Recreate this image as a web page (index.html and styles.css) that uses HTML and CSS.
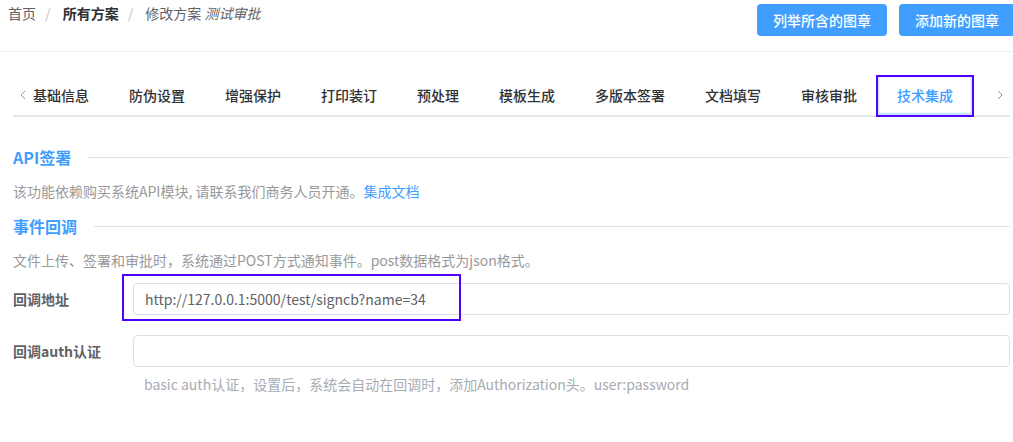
FILE: index.html
```html
<!DOCTYPE html>
<html lang="zh-CN">
<head>
  <meta charset="UTF-8">
  <title>修改方案 - 测试审批</title>
  <link rel="stylesheet" href="styles.css">
</head>
<body>
  <header class="topbar">
    <nav class="crumbs">
      <span class="crumb">首页</span><span class="sep">/</span>
      <span class="crumb strong">所有方案</span><span class="sep">/</span>
      <span class="crumb">修改方案 <i>测试审批</i></span>
    </nav>
    <div class="actions">
      <button class="btn">列举所含的图章</button>
      <button class="btn">添加新的图章</button>
    </div>
  </header>

  <main class="content">
    <div class="tabs">
      <span class="tab-arrow">
        <svg width="6" height="10" viewBox="0 0 6 10"><path d="M5 1 1 5l4 4" fill="none" stroke="#909399" stroke-width="1"/></svg>
      </span>
      <div class="tab-list">
        <span class="tab">基础信息</span>
        <span class="tab">防伪设置</span>
        <span class="tab">增强保护</span>
        <span class="tab">打印装订</span>
        <span class="tab">预处理</span>
        <span class="tab">模板生成</span>
        <span class="tab">多版本签署</span>
        <span class="tab">文档填写</span>
        <span class="tab">审核审批</span>
        <span class="tab active">技术集成</span>
      </div>
      <span class="tab-arrow">
        <svg width="6" height="10" viewBox="0 0 6 10"><path d="M1 1l4 4-4 4" fill="none" stroke="#909399" stroke-width="1"/></svg>
      </span>
    </div>

    <h3 class="sec-title"><span>API签署</span></h3>
    <p class="sec-desc">该功能依赖购买系统API模块, 请联系我们商务人员开通。<a class="link" href="#">集成文档</a></p>

    <h3 class="sec-title"><span>事件回调</span></h3>
    <p class="sec-desc">文件上传、签署和审批时，系统通过POST方式通知事件。post数据格式为json格式。</p>

    <form class="form">
      <div class="form-item">
        <label class="form-label">回调地址</label>
        <div class="field">
          <input class="input" type="text" value="http://127.0.0.1:5000/test/signcb?name=34">
          <span class="mark"></span>
        </div>
      </div>
      <div class="form-item">
        <label class="form-label">回调auth认证</label>
        <div class="field">
          <input class="input" type="text" value="">
          <div class="help">basic auth认证，设置后，系统会自动在回调时，添加Authorization头。user:password</div>
        </div>
      </div>
    </form>
  </main>
</body>
</html>
```

FILE: styles.css
```css
body {
  margin: 0;
  font-family: "Noto Sans CJK SC", "Noto Sans", sans-serif;
  font-size: 14px;
  color: #303133;
  background: #fff;
}
.topbar {
  display: flex;
  justify-content: space-between;
  align-items: flex-start;
  height: 51px;
  padding-left: 8px;
  border-bottom: 1px solid #ebeef5;
}
.crumbs {
  padding-top: 2px;
  line-height: 22px;
  color: #606266;
}
.crumb.strong {
  font-weight: 700;
  color: #303133;
}
.sep {
  margin: 0 9px;
  color: #c0c4cc;
}
.actions {
  display: flex;
  gap: 12px;
  padding-top: 4px;
  margin-right: -2px;
}
.btn {
  height: 32px;
  padding: 0 16px;
  border: none;
  border-radius: 4px;
  background: #409eff;
  color: #fff;
  font-family: inherit;
  font-size: 14px;
  font-weight: 500;
}
.content {
  padding: 0 3px 0 13px;
  margin-top: 23px;
}
.tabs {
  display: flex;
  border-bottom: 2px solid #e4e7ed;
}
.tab-arrow {
  width: 20px;
  display: flex;
  align-items: center;
  justify-content: center;
}
.tab-list {
  flex: 1;
  display: flex;
  white-space: nowrap;
}
.tab {
  height: 40px;
  line-height: 40px;
  padding: 0 20px;
  font-weight: 500;
  color: #303133;
}
.tab:first-child {
  padding-left: 0;
}
.tab.active {
  position: relative;
  color: #409eff;
  box-shadow: inset 0 0 2px 2px rgba(64, 158, 255, 0.35);
}
.tab.active::after {
  content: "";
  position: absolute;
  top: 0;
  left: -1px;
  right: -1px;
  bottom: -2px;
  border: 2px solid #5200ff;
}
.sec-title {
  display: flex;
  align-items: center;
  gap: 17px;
  margin: 28px 0 0;
  font-size: 16px;
  line-height: 24px;
  font-weight: 700;
  color: #409eff;
}
.sec-title::after {
  content: "";
  flex: 1;
  height: 1px;
  background: #dcdfe6;
}
.sec-title + .sec-desc {
  margin-top: 11px;
}
.sec-desc {
  margin: 0;
  line-height: 22px;
  color: #999;
}
.sec-desc + .sec-title {
  margin-top: 12px;
}
.link {
  color: #409eff;
  text-decoration: none;
}
.form {
  margin-top: 12px;
}
.form-item {
  display: flex;
  margin-bottom: 20px;
}
.form-label {
  width: 120px;
  flex-shrink: 0;
  line-height: 32px;
  font-weight: 700;
  color: #606266;
}
.field {
  flex: 1;
  position: relative;
}
.input {
  display: block;
  box-sizing: border-box;
  width: 100%;
  height: 32px;
  padding: 0 11px;
  border: 1px solid #dcdfe6;
  border-radius: 4px;
  font-family: inherit;
  font-size: 14px;
  color: #606266;
  outline: none;
}
.mark {
  position: absolute;
  left: -11px;
  top: -9px;
  width: 339px;
  height: 47px;
  box-sizing: border-box;
  border: 2px solid #5200ff;
}
.help {
  margin: 6px 0 0 11px;
  line-height: 22px;
  color: #a8abb2;
}
```
